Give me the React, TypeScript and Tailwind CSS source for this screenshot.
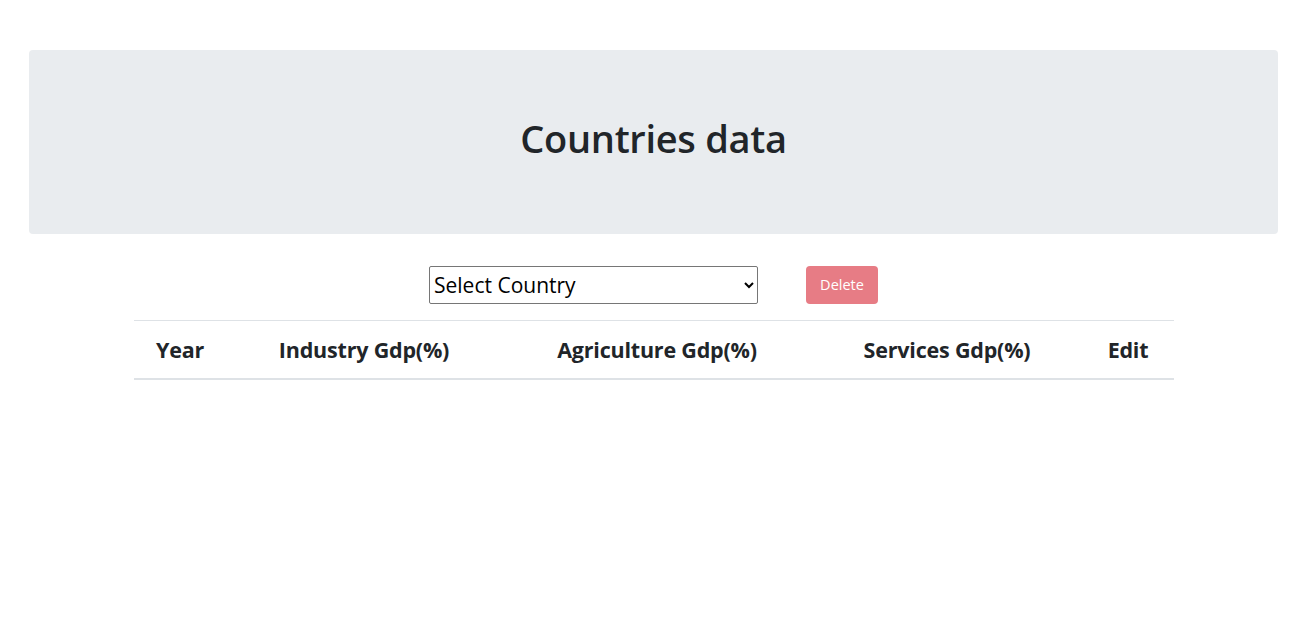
import { useState } from "react";

const columns = [
    { label: "Year", width: "w-[92px]" },
    { label: "Industry Gdp(%)", width: "w-[276px]" },
    { label: "Agriculture Gdp(%)", width: "w-[310px]" },
    { label: "Services Gdp(%)", width: "w-[270px]" },
    { label: "Edit", width: "w-[92px]" },
];

export default function App() {
    const [country, setCountry] = useState("");

    return (
        <div className="min-h-[624px] bg-white text-[#212529] font-['Open_Sans','Noto_Sans',sans-serif]">
            {/* header */}
            <div className="pt-[50px] pl-[29px]">
                <div className="w-[1249px] h-[184px] bg-[#e9ecef] rounded-[4px] flex items-center justify-center pb-[8px]">
                    <h1 className="text-[38px] font-semibold tracking-[-0.3px] leading-none">Countries data</h1>
                </div>
            </div>

            {/* controls */}
            <div className="mt-[32px] flex justify-center items-center gap-[48px] pr-[4px]">
                <select
                    value={country}
                    onChange={(e) => setCountry(e.target.value)}
                    className="w-[329px] h-[38px] border border-[#767676] rounded-[2px] bg-white px-0 text-[21px] text-black"
                >
                    <option value="">Select Country</option>
                </select>
                <button
                    disabled
                    className="w-[72px] h-[38px] rounded-[4px] bg-[#e77c85] text-white text-[14.5px]"
                >
                    Delete
                </button>
            </div>

            {/* table */}
            <div className="mt-[16px] ml-[134px] w-[1040px]">
                <table className="w-full border-collapse table-fixed">
                    <thead>
                        <tr className="border-t border-[#dee2e6] border-b-2">
                            {columns.map((col) => (
                                <th
                                    key={col.label}
                                    className={`${col.width} h-[58px] pt-[2px] text-center text-[21.5px] font-bold tracking-[-0.2px]`}
                                >
                                    {col.label}
                                </th>
                            ))}
                        </tr>
                    </thead>
                </table>
            </div>
        </div>
    );
}
